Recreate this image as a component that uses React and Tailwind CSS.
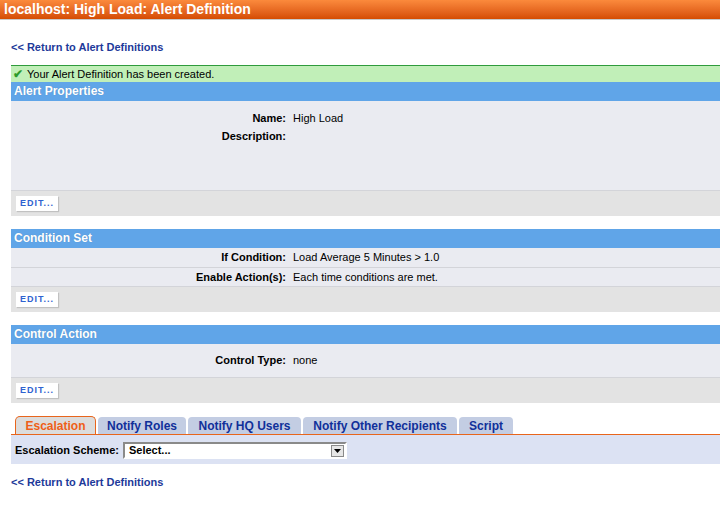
export default function App() {
  const font = { fontFamily: '"Liberation Sans", Arial, sans-serif' };
  const EditBtn = () => (
    <div className="h-[26px] flex items-center pl-[5px] bg-[#e3e3e3] border-t border-[#d3d4d9]">
      <span className="bg-white text-[#2f62d0] font-bold text-[9px] tracking-[1px] px-[4px] h-[15px] leading-[15px] shadow-[1px_1px_1px_rgba(0,0,0,0.15)]">EDIT...</span>
    </div>
  );
  const Bar = ({ children }) => (
    <div className="h-[19px] bg-[#60a5e8] text-white font-bold text-[12px] leading-[19px] pl-[3px] [text-shadow:0_0_1px_rgba(0,0,0,0.2)]">{children}</div>
  );
  const Row = ({ label, value, border }) => (
    <div className={`flex h-[19px] items-center text-[11px] ${border ? "border-t border-[#d3d4d9]" : ""}`}>
      <div className="w-[282px] text-right font-bold pr-[7px] text-black">{label}</div>
      <div className="text-black">{value}</div>
    </div>
  );
  return (
    <div style={font} className="w-[720px] h-[520px] bg-white overflow-hidden">
      <div className="h-[20px] bg-gradient-to-b from-[#fb8a3c] to-[#d54c00] border-b border-[#c9c9c9] text-white font-bold text-[14px] leading-[19px] pl-[4px]">
        localhost: High Load: Alert Definition
      </div>
      <div className="pl-[11px]">
        <div className="h-[45px] pt-[19px] text-[11px] font-bold text-[#1d3a9a]">&lt;&lt; Return to Alert Definitions</div>
        <div className="h-[17px] bg-[#c1efb8] border-t border-[#2f9b3c] text-[11px] leading-[16px] pl-[2px] flex items-center">
          <span className="text-[#2c9a2c] font-bold mr-[4px] text-[12px]">✔</span>
          <span>Your Alert Definition has been created.</span>
        </div>
        <Bar>Alert Properties</Bar>
        <div className="bg-[#eaebf1] h-[89px] pt-[8px] text-[11px]">
          <div className="flex h-[18px] items-center">
            <div className="w-[282px] text-right font-bold pr-[7px]">Name:</div>
            <div>High Load</div>
          </div>
          <div className="flex h-[18px] items-center">
            <div className="w-[282px] text-right font-bold pr-[7px]">Description:</div>
            <div></div>
          </div>
        </div>
        <EditBtn />
        <div className="h-[13px]" />
        <Bar>Condition Set</Bar>
        <div className="bg-[#eaebf1]">
          <Row label="If Condition:" value="Load Average 5 Minutes > 1.0" />
          <Row label="Enable Action(s):" value="Each time conditions are met." border />
        </div>
        <EditBtn />
        <div className="h-[13px]" />
        <Bar>Control Action</Bar>
        <div className="bg-[#eaebf1] h-[33px] flex items-center text-[11px]">
          <div className="w-[282px] text-right font-bold pr-[7px]">Control Type:</div>
          <div>none</div>
        </div>
        <EditBtn />
        <div className="h-[13px]" />
        <div className="flex items-end h-[18px] pl-[4px] gap-[2px] border-b border-[#e8651c] box-content">
          <div className="h-[18px] w-[81px] rounded-t-[5px] border border-b-0 border-[#e8651c] bg-[#dcdcdc] text-[#ef5f17] font-bold text-[12px] flex items-center justify-center">Escalation</div>
          <div className="h-[17px] w-[88px] rounded-t-[4px] bg-[#c3cde3] text-[#10309a] font-bold text-[12px] flex items-center justify-center">Notify Roles</div>
          <div className="h-[17px] w-[113px] rounded-t-[4px] bg-[#c3cde3] text-[#10309a] font-bold text-[12px] flex items-center justify-center">Notify HQ Users</div>
          <div className="h-[17px] w-[154px] rounded-t-[4px] bg-[#c3cde3] text-[#10309a] font-bold text-[12px] flex items-center justify-center">Notify Other Recipients</div>
          <div className="h-[17px] w-[54px] rounded-t-[4px] bg-[#c3cde3] text-[#10309a] font-bold text-[12px] flex items-center justify-center">Script</div>
        </div>
        <div className="h-[29px] bg-[#dce2f3] flex items-center pl-[4px] pt-[2px] text-[11px]">
          <span className="font-bold mr-[4px]">Escalation Scheme:</span>
          <div className="w-[224px] h-[17px] bg-white border-2 border-t-[#8a8a8a] border-l-[#8a8a8a] border-r-white border-b-white flex items-center justify-between">
            <span className="font-bold pl-[4px] text-[11px]">Select...</span>
            <div className="w-[13px] h-[12px] mr-[1px] bg-[#e6e6e6] border border-[#8a8a8a] flex items-center justify-center">
              <svg width="7" height="4" viewBox="0 0 7 4"><path d="M0 0H7L3.5 4Z" fill="#000" /></svg>
            </div>
          </div>
        </div>
        <div className="pt-[10px] text-[11px] font-bold text-[#1d3a9a]">&lt;&lt; Return to Alert Definitions</div>
      </div>
    </div>
  );
}
